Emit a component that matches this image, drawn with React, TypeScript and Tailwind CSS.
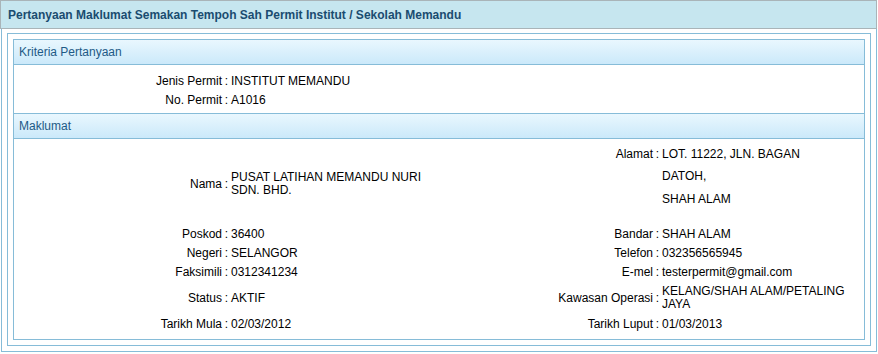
import React from 'react';

const LEFT = [
  { label: 'Poskod', value: '36400' },
  { label: 'Negeri', value: 'SELANGOR' },
  { label: 'Faksimili', value: '0312341234' },
];

const RIGHT = [
  { label: 'Bandar', value: 'SHAH ALAM' },
  { label: 'Telefon', value: '032356565945' },
  { label: 'E-mel', value: 'testerpermit@gmail.com' },
];

const SectionHeader = ({ title }: { title: string }) => (
  <div className="h-[25px] flex items-center pl-[5px] border-b border-[#86bcd8] bg-gradient-to-b from-[#e9f7fe] to-[#cbe9fa] text-[12px] text-[#1e5a86]">
    {title}
  </div>
);

const Colon = () => <div className="w-[9px] text-center">:</div>;

export default function App() {
  return (
    <div className="w-[877px] bg-white text-[12px] text-black" style={{ fontFamily: '"Liberation Sans", Arial, sans-serif' }}>
      <div className="h-[29px] flex items-center pl-[7px] pt-[1px] bg-[#c6e6ef] border border-[#a9b4b8]">
        <span className="font-bold text-[12px] text-[#1a4c70]">
          Pertanyaan Maklumat Semakan Tempoh Sah Permit Institut / Sekolah Memandu
        </span>
      </div>

      <div className="ml-[1px] border-x border-b border-[#86bcd8] pt-[4px] px-[5px] pb-[5px]">
        <div className="border border-[#86bcd8] p-[5px]">
          <div className="border border-[#86bcd8]">
            <SectionHeader title="Kriteria Pertanyaan" />
            <div className="pt-[6px] pb-[4px] border-b border-[#86bcd8]">
              <div className="flex h-[19px] items-center">
                <div className="w-[208px] text-right">Jenis Permit</div>
                <Colon />
                <div>INSTITUT MEMANDU</div>
              </div>
              <div className="flex h-[19px] items-center">
                <div className="w-[208px] text-right">No. Permit</div>
                <Colon />
                <div>A1016</div>
              </div>
            </div>

            <SectionHeader title="Maklumat" />
            <div className="pt-[4px] pb-[4px] leading-[13px]">
              {/* nama / alamat */}
              <div className="flex h-[82px]">
                <div className="flex w-[516px] items-center">
                  <div className="w-[208px] text-right">Nama</div>
                  <Colon />
                  <div>
                    PUSAT LATIHAN MEMANDU NURI
                    <br />
                    SDN. BHD.
                  </div>
                </div>
                <div className="flex items-start">
                  <div className="w-[123px] h-[22px] flex items-center justify-end">Alamat</div>
                  <div className="h-[22px] flex items-center"><Colon /></div>
                  <div>
                    <div className="h-[22px] flex items-center">LOT. 11222, JLN. BAGAN</div>
                    <div className="h-[23px] flex items-center">DATOH,</div>
                    <div className="h-[22px] flex items-center">SHAH ALAM</div>
                  </div>
                </div>
              </div>

              {LEFT.map((l, i) => (
                <div key={l.label} className="flex h-[19px] items-center">
                  <div className="flex w-[516px] items-center">
                    <div className="w-[208px] text-right">{l.label}</div>
                    <Colon />
                    <div>{l.value}</div>
                  </div>
                  <div className="flex items-center">
                    <div className="w-[123px] text-right">{RIGHT[i].label}</div>
                    <Colon />
                    <div>{RIGHT[i].value}</div>
                  </div>
                </div>
              ))}

              <div className="flex h-[32px] items-center">
                <div className="flex w-[516px] items-center">
                  <div className="w-[208px] text-right">Status</div>
                  <Colon />
                  <div>AKTIF</div>
                </div>
                <div className="flex items-center">
                  <div className="w-[123px] text-right">Kawasan Operasi</div>
                  <Colon />
                  <div>
                    KELANG/SHAH ALAM/PETALING
                    <br />
                    JAYA
                  </div>
                </div>
              </div>

              <div className="flex h-[21px] items-center">
                <div className="flex w-[516px] items-center">
                  <div className="w-[208px] text-right">Tarikh Mula</div>
                  <Colon />
                  <div>02/03/2012</div>
                </div>
                <div className="flex items-center">
                  <div className="w-[123px] text-right">Tarikh Luput</div>
                  <Colon />
                  <div>01/03/2013</div>
                </div>
              </div>
            </div>
          </div>
        </div>
      </div>
    </div>
  );
}
